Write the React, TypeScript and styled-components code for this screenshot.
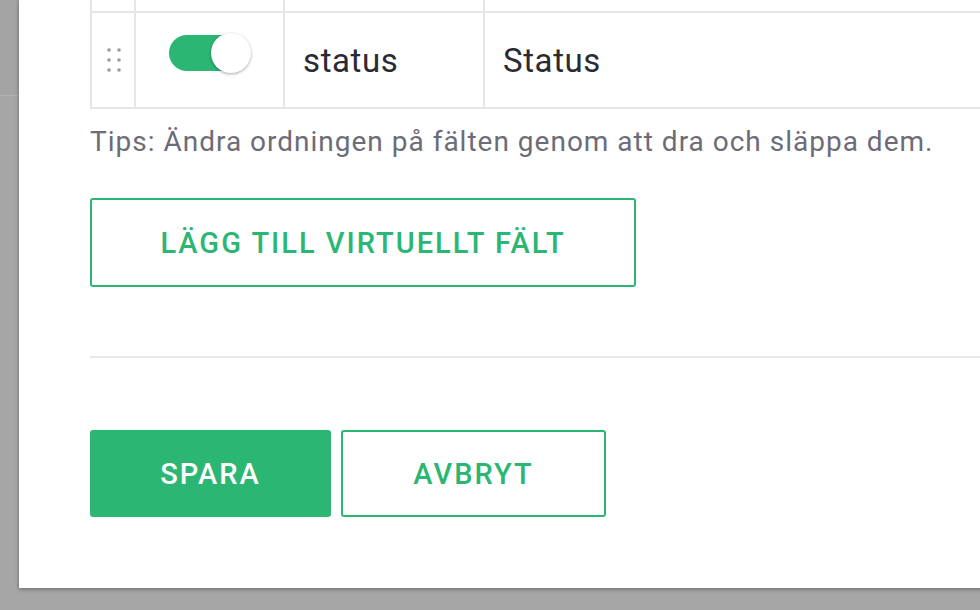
import React from "react";
import styled, { createGlobalStyle } from "styled-components";

const GREEN = "#2bb673";

const Global = createGlobalStyle`
  html, body { margin: 0; padding: 0; }
  body {
    background: #a6a6a6;
    font-family: Roboto, "Liberation Sans", sans-serif;
    overflow: hidden;
  }
`;

const Backdrop = styled.div`
  display: flex;
  width: 980px;
  height: 610px;
  background: #a6a6a6;
  overflow: hidden;
`;

const PageEdge = styled.div`
  flex: 0 0 18px;
  display: flex;
  flex-direction: column;
`;

const PageHeader = styled.div`
  height: 95px;
  border-bottom: 1px solid #b2b2b2;
  background: #a4a4a4;
`;

const Modal = styled.div`
  flex: 0 0 1100px;
  margin-left: 1px;
  height: 588px;
  background: #ffffff;
  box-shadow: 0 2px 4px rgba(0, 0, 0, 0.25), -1px 0 2px rgba(0, 0, 0, 0.12);
  padding: 0 0 0 71px;
  box-sizing: border-box;
  display: flex;
  flex-direction: column;
`;

const Table = styled.div`
  display: flex;
  flex-direction: column;
  border-left: 2px solid #e6e6e6;
  border-bottom: 2px solid #e6e6e6;
`;

const Row = styled.div<{ $h: number }>`
  display: grid;
  grid-template-columns: 44px 149px 200px 1fr;
  height: ${(p) => p.$h}px;
  border-bottom: 2px solid #e6e6e6;
  &:last-child { border-bottom: none; }
`;

const Cell = styled.div<{ $center?: boolean }>`
  border-right: 2px solid #e6e6e6;
  display: flex;
  align-items: center;
  justify-content: ${(p) => (p.$center ? "center" : "flex-start")};
  padding: 0 0 0 ${(p) => (p.$center ? 0 : 18)}px;
  font-size: 33px;
  letter-spacing: 0.6px;
  color: #2a2a33;
  box-sizing: border-box;
`;

const Handle = styled.svg`
  display: block;
  margin-left: 2px;
`;

const Switch = styled.div`
  position: relative;
  width: 82px;
  height: 40px;
  margin-top: -14px;
  display: flex;
  align-items: center;
`;

const Track = styled.div`
  width: 76px;
  height: 36px;
  border-radius: 18px;
  background: ${GREEN};
`;

const Knob = styled.div`
  position: absolute;
  right: 0;
  top: 0;
  width: 40px;
  height: 40px;
  border-radius: 50%;
  background: #fff;
  box-shadow: 0 1px 3px rgba(0, 0, 0, 0.35);
`;

const Tips = styled.p`
  margin: 16px 0 0;
  font-size: 28px;
  letter-spacing: 1px;
  line-height: 34px;
  color: #6c6c78;
  white-space: nowrap;
`;

const OutlineButton = styled.button<{ $w: number; $h: number }>`
  width: ${(p) => p.$w}px;
  height: ${(p) => p.$h}px;
  border: 2px solid ${GREEN};
  border-radius: 3px;
  background: #fff;
  color: ${GREEN};
  font-family: Roboto, "Liberation Sans", sans-serif;
  font-weight: 500;
  font-size: 29px;
  letter-spacing: 2px;
  padding: 0;
  display: flex;
  align-items: center;
  justify-content: center;
`;

const FilledButton = styled(OutlineButton)`
  background: ${GREEN};
  color: #fff;
`;

const AddWrap = styled.div`
  margin-top: 39px;
`;

const Divider = styled.hr`
  margin: 69px 0 0;
  border: none;
  height: 2px;
  background: #e8e8e8;
`;

const Actions = styled.div`
  display: flex;
  gap: 10px;
  margin-top: 72px;
`;

const Dots = () => (
  <Handle width="16" height="26" viewBox="0 0 16 26">
    {[0, 1, 2].map((r) =>
      [0, 1].map((c) => (
        <circle key={`${r}-${c}`} cx={3 + c * 10} cy={3 + r * 10} r="1.8" fill="#999" />
      ))
    )}
  </Handle>
);

export default function App() {
  return (
    <>
      <Global />
      <Backdrop>
        <PageEdge>
          <PageHeader />
        </PageEdge>
        <Modal>
          <Table>
            <Row $h={11}>
              <Cell />
              <Cell />
              <Cell />
              <Cell />
            </Row>
            <Row $h={94}>
              <Cell $center>
                <Dots />
              </Cell>
              <Cell $center>
                <Switch>
                  <Track />
                  <Knob />
                </Switch>
              </Cell>
              <Cell>status</Cell>
              <Cell>Status</Cell>
            </Row>
          </Table>
          <Tips>Tips: Ändra ordningen på fälten genom att dra och släppa dem.</Tips>
          <AddWrap>
            <OutlineButton $w={546} $h={89}>LÄGG TILL VIRTUELLT FÄLT</OutlineButton>
          </AddWrap>
          <Divider />
          <Actions>
            <FilledButton $w={241} $h={87}>SPARA</FilledButton>
            <OutlineButton $w={265} $h={87}>AVBRYT</OutlineButton>
          </Actions>
        </Modal>
      </Backdrop>
    </>
  );
}
